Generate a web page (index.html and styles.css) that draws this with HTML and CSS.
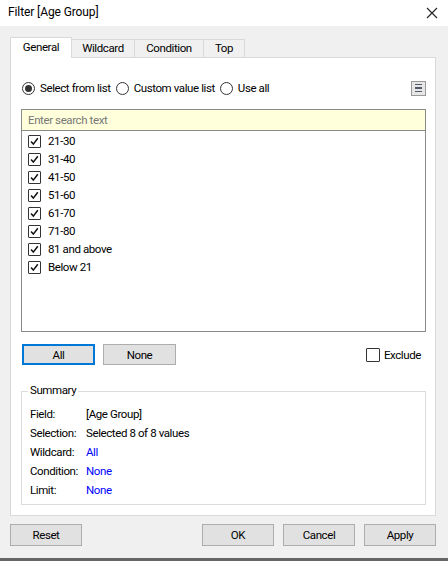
FILE: index.html
```html
<!DOCTYPE html>
<html>
<head>
<meta charset="utf-8">
<link rel="stylesheet" href="styles.css">
</head>
<body>
<div class="window">
  <div class="titlebar">
    <span class="title">Filter [Age Group]</span>
    <svg class="close" width="12" height="12" viewBox="0 0 12 12"><path d="M1 1L11 11M11 1L1 11" stroke="#222" stroke-width="1.1" fill="none"/></svg>
  </div>
  <div class="main">
    <div class="tabs">
      <div class="tab active">General</div>
      <div class="tab w-wild">Wildcard</div>
      <div class="tab w-cond">Condition</div>
      <div class="tab w-top">Top</div>
    </div>
    <div class="panel">
      <div class="radio-row">
        <div class="radios">
          <span class="radio on"></span><span class="rlabel">Select from list</span>
          <span class="radio"></span><span class="rlabel">Custom value list</span>
          <span class="radio"></span><span class="rlabel">Use all</span>
        </div>
        <div class="menu-btn"><i></i><i></i><i></i></div>
      </div>
      <div class="search">Enter search text</div>
      <div class="list">
        <div class="item"><span class="cb"><svg viewBox="0 0 13 13"><path d="M2.4 6.6L5.1 9.6L10.4 2.6" stroke="#111" stroke-width="1.8" fill="none"/></svg></span>21-30</div>
        <div class="item"><span class="cb"><svg viewBox="0 0 13 13"><path d="M2.4 6.6L5.1 9.6L10.4 2.6" stroke="#111" stroke-width="1.8" fill="none"/></svg></span>31-40</div>
        <div class="item"><span class="cb"><svg viewBox="0 0 13 13"><path d="M2.4 6.6L5.1 9.6L10.4 2.6" stroke="#111" stroke-width="1.8" fill="none"/></svg></span>41-50</div>
        <div class="item"><span class="cb"><svg viewBox="0 0 13 13"><path d="M2.4 6.6L5.1 9.6L10.4 2.6" stroke="#111" stroke-width="1.8" fill="none"/></svg></span>51-60</div>
        <div class="item"><span class="cb"><svg viewBox="0 0 13 13"><path d="M2.4 6.6L5.1 9.6L10.4 2.6" stroke="#111" stroke-width="1.8" fill="none"/></svg></span>61-70</div>
        <div class="item"><span class="cb"><svg viewBox="0 0 13 13"><path d="M2.4 6.6L5.1 9.6L10.4 2.6" stroke="#111" stroke-width="1.8" fill="none"/></svg></span>71-80</div>
        <div class="item"><span class="cb"><svg viewBox="0 0 13 13"><path d="M2.4 6.6L5.1 9.6L10.4 2.6" stroke="#111" stroke-width="1.8" fill="none"/></svg></span>81 and above</div>
        <div class="item"><span class="cb"><svg viewBox="0 0 13 13"><path d="M2.4 6.6L5.1 9.6L10.4 2.6" stroke="#111" stroke-width="1.8" fill="none"/></svg></span>Below 21</div>
      </div>
      <div class="btn-row">
        <div class="btn focus">All</div>
        <div class="btn">None</div>
        <div class="spacer"></div>
        <div class="exclude"><span class="cb empty"></span>Exclude</div>
      </div>
      <div class="summary">
        <div class="legend">Summary</div>
        <div class="srow"><span class="sl">Field:</span><span>[Age Group]</span></div>
        <div class="srow"><span class="sl">Selection:</span><span>Selected 8 of 8 values</span></div>
        <div class="srow"><span class="sl">Wildcard:</span><span class="blue">All</span></div>
        <div class="srow"><span class="sl">Condition:</span><span class="blue">None</span></div>
        <div class="srow"><span class="sl">Limit:</span><span class="blue">None</span></div>
      </div>
    </div>
    <div class="footer">
      <div class="btn fbtn">Reset</div>
      <div class="spacer"></div>
      <div class="btn fbtn">OK</div>
      <div class="btn fbtn">Cancel</div>
      <div class="btn fbtn">Apply</div>
    </div>
  </div>
  <div class="bottomline"></div>
</div>
</body>
</html>
```
FILE: styles.css
```css
* { box-sizing: border-box; }
html, body { margin: 0; padding: 0; }
body {
  width: 448px; height: 561px; overflow: hidden;
  font-family: Roboto, "Liberation Sans", sans-serif;
  font-size: 11.5px; letter-spacing: -0.4px; color: #000; background: #f0f0f0;
}
.window { width: 448px; height: 561px; display: flex; flex-direction: column; }
.titlebar {
  height: 26px; background: #fff; display: flex; align-items: center;
  justify-content: space-between; padding: 0 10px 2px 8px;
}
.title { font-size: 12px; letter-spacing: -0.1px; color: #000; }
.close { margin-top: 2px; }
.main { flex: 1; background: #f0f0f0; padding: 11px 12px 0 10px; display: flex; flex-direction: column; }
.tabs { display: flex; align-items: flex-end; height: 20px; position: relative; z-index: 1; }
.tab {
  height: 18px; border: 1px solid #d9d9d9; border-bottom: none; border-left: none;
  background: #f0f0f0; display: flex; align-items: center; justify-content: center;
  padding-bottom: 1px;
}
.tab.active {
  height: 21px; width: 62px; background: #fff; border-left: 1px solid #d9d9d9;
  margin-bottom: -1px; padding-bottom: 2px;
}
.w-wild { width: 63px; }
.w-cond { width: 69px; }
.w-top { width: 41px; }
.panel {
  width: 426px; height: 459px; background: #fff; border: 1px solid #d9d9d9;
  padding: 22px 9px 0 10px; display: flex; flex-direction: column;
}
.radio-row { display: flex; align-items: center; justify-content: space-between; height: 16px; margin-bottom: 13px; }
.radios { display: flex; align-items: center; }
.radio {
  width: 13px; height: 13px; border: 1px solid #333; border-radius: 50%;
  display: inline-flex; align-items: center; justify-content: center; margin-left: 1px; margin-right: 5px;
}
.radio.on::after { content: ""; width: 7px; height: 7px; border-radius: 50%; background: #333; }
.rlabel { margin-right: 4px; }
.menu-btn {
  width: 15px; height: 15px; border: 1px solid #999; background: #e6e6e6;
  display: flex; flex-direction: column; justify-content: center; align-items: center; gap: 2px;
}
.menu-btn i { display: block; width: 7px; height: 1.4px; background: #505a6a; }
.search {
  height: 22px; border: 1px solid #8a8a8a; background: #ffffdc; color: #777;
  padding: 0 6px; display: flex; align-items: center; width: 405px;
}
.list {
  height: 201px; width: 405px; border: 1px solid #8a8a8a; border-top: none;
  padding: 1px 0 0 6px;
}
.item { height: 18px; display: flex; align-items: center; }
.cb {
  width: 13px; height: 13px; border: 1px solid #333; border-radius: 1px;
  display: inline-flex; margin-right: 7px; background: #fff;
}
.cb svg { width: 11px; height: 11px; }
.btn-row { display: flex; align-items: center; margin-top: 12px; height: 21px; }
.btn {
  width: 73px; height: 21px; border: 1px solid #adadad; background: #e1e1e1;
  display: flex; align-items: center; justify-content: center; margin-right: 8px;
}
.btn.focus { border: 2px solid #0078d7; margin-left: 1px; }
.spacer { flex: 1; }
.exclude { display: flex; align-items: center; margin-right: 5px; }
.exclude .cb { margin-right: 4px; width: 14px; height: 14px; }
.summary {
  margin-top: 26px; width: 405px; height: 114px; border: 1px solid #dcdcdc;
  position: relative; padding: 12px 0 0 8px;
}
.legend {
  position: absolute; top: -9px; left: 6px; background: #fff; padding: 0 2px;
}
.srow { height: 19px; display: flex; align-items: center; }
.sl { width: 56px; }
.blue { color: #0000ff; }
.footer { display: flex; align-items: center; margin-top: 8px; height: 22px; }
.fbtn { margin-right: 9px; height: 22px; width: 72px; }
.fbtn:last-child { margin-right: 0; }
.bottomline { height: 3px; background: #666; margin-bottom: 0; }
```
